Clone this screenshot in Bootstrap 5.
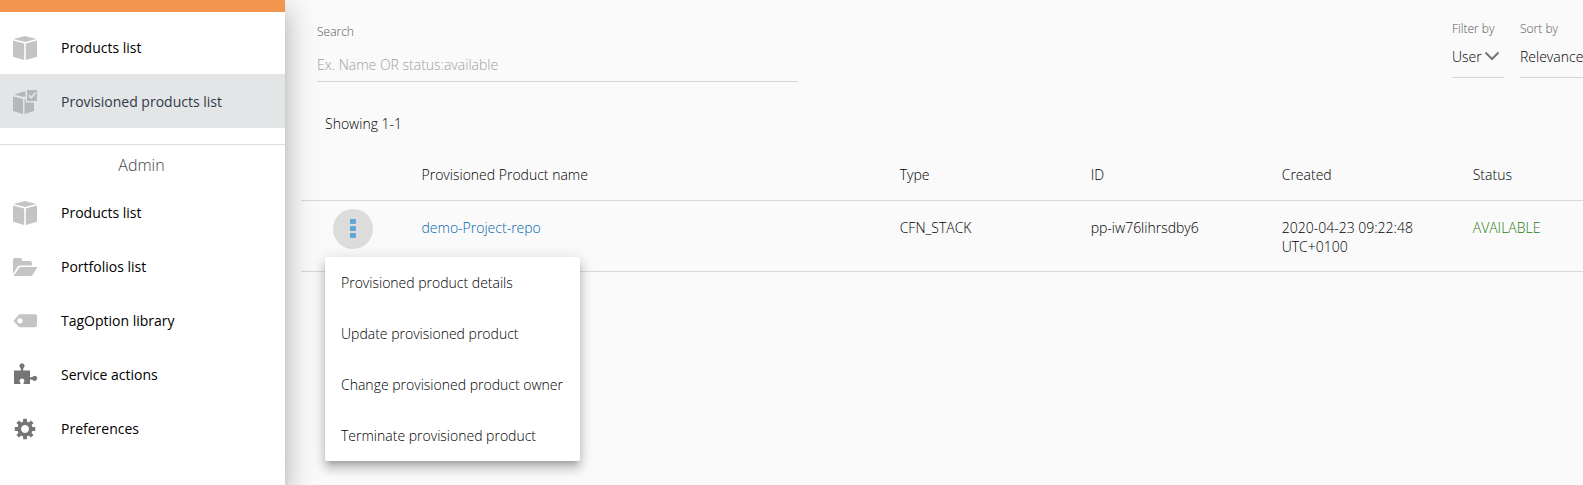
<!DOCTYPE html>
<html lang="en">
<head>
<meta charset="utf-8">
<meta name="viewport" content="width=device-width, initial-scale=1">
<title>Provisioned products list</title>
<link href="https://cdn.jsdelivr.net/npm/bootstrap@5.3.0/dist/css/bootstrap.min.css" rel="stylesheet">
<style>
  body { font-family: "Open Sans", "Noto Sans", sans-serif; font-size: 14px; font-weight: 300; line-height: 19px; color: #000; background: #fafafa; }
  .side { width: 285px; background: #fff; position: relative; z-index: 2;
    box-shadow: 0 8px 10px -5px rgba(0,0,0,.2), 0 16px 24px 2px rgba(0,0,0,.14), 0 6px 30px 5px rgba(0,0,0,.12); }
  .brand-strip { height: 12px; background: #f2954f; }
  .side .nav-link { height: 54px; gap: 23px; padding: 1px 12px 0; color: #000; font-weight: 500; }
  .side .nav-link.active { background: #e3e5e7; color: #2f3b49; }
  .side svg { width: 26px; height: 26px; flex: none; fill: #c4c4c4; }
  .side .active svg { fill: #b5b7b8; }
  .side svg.dark-icon { fill: #757575; }
  .admin-head { font-size: 16px; line-height: 24px; color: #444; padding: 8px 2px 0 0; border-top: 1px solid #ddd; font-weight: 300; }
  .work { padding-left: 16px; min-width: 0; }
  .small-label { font-size: 12px; line-height: 16px; color: #555; }
  .tools { padding: 21px 0 0 16px; }
  .search-box { width: 38%; padding-top: 3px; }
  .line-input { border: 0; border-bottom: 1px solid #d5d5d5; border-radius: 0; background-color: transparent; padding: 0; font-size: 14px; font-weight: 300; line-height: 19px; height: 34px; color: #000; }
  .line-input::placeholder { color: #a0a0a0; }
  .line-input.form-select { height: 41px; padding: 0 0 2px; }
  .pick-user { width: 52px; background-size: 16px 12px; background-position: right 4px top 13px;
    background-image: url("data:image/svg+xml,%3Csvg xmlns='http://www.w3.org/2000/svg' viewBox='0 0 16 12'%3E%3Cpath d='M1.5 2.5L8 9l6.500-6.500' fill='none' stroke='%23757575' stroke-width='2'/%3E%3C/svg%3E"); }
  .pick-sort { width: 63px; background-image: none; }
  .count { padding: 32px 0 0 24px; }
  .grid { table-layout: fixed; margin: 16px 0 0; }
  .grid th, .grid td { padding: 0 8px 0 0; border-bottom: 1px solid #d9d9d9; vertical-align: top; background: none; color: #000; font-weight: 300; }
  .grid th { height: 51px; padding-top: 16px; }
  .grid td { height: 71px; padding-top: 17px; }
  .grid td.act { padding: 8px 0 0 32px; }
  .grid a { color: #0068b0; }
  .grid td.ok { color: #237a08; }
  .dots { width: 40px; height: 40px; background: #dcdcdc; border: 0; }
  .grid .dropdown-menu { top: 48px; left: -8px; width: 255px; padding: 0; border: 0; border-radius: 2px; font-size: 14px; --bs-dropdown-link-color: #000;
    box-shadow: 0 5px 5px -3px rgba(0,0,0,.2), 0 8px 10px 1px rgba(0,0,0,.14), 0 3px 14px 2px rgba(0,0,0,.12); }
  .grid .dropdown-item { height: 51px; padding: 0 16px; font-weight: 300; }
</style>
</head>
<body>
<svg class="d-none">
  <symbol id="box" viewBox="0 0 26 26"><path d="M13 1L24.500 4 13 7 1.500 4z"/><path d="M1 5.500L12.200 8.500V25L1 21.800z"/><path d="M25 5.500L13.800 8.500V25L25 21.800z"/></symbol>
</svg>
<div class="d-flex min-vh-100 overflow-hidden">
  <aside class="side flex-shrink-0">
    <div class="brand-strip"></div>
    <nav class="nav flex-column flex-nowrap pt-2 pb-3">
      <a class="nav-link d-flex align-items-center" href="#"><svg><use href="#box"/></svg>Products list</a>
      <a class="nav-link d-flex align-items-center active" href="#">
        <svg viewBox="0 0 26 26"><path d="M2 5.500L12 2.500h1.500v5L11.500 8z"/><path d="M1 7.500L11 10v15L1 22z"/><path d="M12.500 10h1.200v3.500H22V22l-9.500 3z"/><path fill-rule="evenodd" d="M15 1h10v11H15zM16.300 6.800l2.900 3.100L24.200 4.200l-1.200-1.200-3.900 4.500-1.500-1.900z"/></svg>
        Provisioned products list</a>
    </nav>
    <h2 class="admin-head text-center mb-0">Admin</h2>
    <nav class="nav flex-column flex-nowrap pt-2">
      <a class="nav-link d-flex align-items-center" href="#"><svg><use href="#box"/></svg>Products list</a>
      <a class="nav-link d-flex align-items-center" href="#">
        <svg viewBox="0 0 26 26"><path d="M1 20V6q0-2 2-2h5q2 0 2 2v1h8q2 0 2 2v2.500H8q-1.500 0-2.500 1.200z"/><path d="M1.500 22l5.500-8q.8-1 2-1h16q.5.200 0 1l-4.500 7q-.7 1-2 1z"/></svg>
        Portfolios list</a>
      <a class="nav-link d-flex align-items-center" href="#">
        <svg viewBox="0 0 26 26"><path fill-rule="evenodd" d="M2 12.200L6.500 7q.7-.7 1.700-.7H23q2 0 2 2v9q0 2-2 2H8.200q-1 0-1.700-.7L2 13.500q-.6-.7 0-1.300zM8 10.200a2.700 2.700 0 1 0 .01 0z"/></svg>
        TagOption library</a>
      <a class="nav-link d-flex align-items-center" href="#">
        <svg class="dark-icon" viewBox="0 0 26 26"><path d="M2 8.500h6.800q.4-1.700-.7-3a2.500 2.500 0 1 1 3.800 0q-1.100 1.300-.7 3H18v6.600q1.700.4 3-.7a2.500 2.500 0 1 1 0 3.800q-1.300-1.100-3-.7V22h-6.500q-.2-1.300.8-2.500a2.400 2.400 0 1 0-4.600 0q1 1.200.8 2.500H2z"/></svg>
        Service actions</a>
      <a class="nav-link d-flex align-items-center" href="#">
        <svg class="dark-icon" viewBox="0 0 26 26"><path fill-rule="evenodd" d="M11.100 2.800h3.800v2.800l2 .8 2-2 2.700 2.700-2 2 .8 2h2.800v3.800h-2.800l-.8 2 2 2-2.700 2.700-2-2-2 .8v2.800h-3.800v-2.800l-2-.8-2 2-2.700-2.700 2-2-.8-2H2.800v-3.800h2.800l.8-2-2-2 2.700-2.700 2 2 2-.8zM13 9a4 4 0 1 0 .01 0z"/></svg>
        Preferences</a>
    </nav>
  </aside>

  <main class="work flex-grow-1">
    <form class="tools d-flex align-items-start justify-content-between">
      <div class="search-box">
        <label class="small-label d-block mb-2" for="q">Search</label>
        <input class="form-control line-input shadow-none" id="q" type="text" placeholder="Ex. Name OR status:available">
      </div>
      <div class="d-flex gap-3 flex-shrink-0">
        <div>
          <label class="small-label d-block" for="who">Filter by</label>
          <select class="form-select line-input pick-user" id="who"><option>User</option></select>
        </div>
        <div>
          <label class="small-label d-block" for="sort">Sort by</label>
          <select class="form-select line-input pick-sort" id="sort"><option>Relevance</option></select>
        </div>
      </div>
    </form>
    <p class="count mb-0">Showing 1-1</p>
    <table class="table grid">
      <colgroup><col style="width:9.4%"><col style="width:37.3%"><col style="width:14.9%"><col style="width:14.9%"><col style="width:14.9%"><col></colgroup>
      <thead>
        <tr><th scope="col"></th><th scope="col">Provisioned Product name</th><th scope="col">Type</th><th scope="col">ID</th><th scope="col">Created</th><th scope="col">Status</th></tr>
      </thead>
      <tbody>
        <tr>
          <td class="act">
            <div class="dropdown">
              <button class="dots rounded-circle d-flex align-items-center justify-content-center p-0" type="button" data-bs-toggle="dropdown" aria-expanded="true" aria-label="Actions">
                <svg width="6" height="20" viewBox="0 0 6 20" fill="#5fa8d3"><rect width="6" height="5" rx="1"/><rect y="7" width="6" height="5" rx="1"/><rect y="14" width="6" height="5" rx="1"/></svg>
              </button>
              <div class="dropdown-menu show">
                <button class="dropdown-item" type="button">Provisioned product details</button>
                <button class="dropdown-item" type="button">Update provisioned product</button>
                <button class="dropdown-item" type="button">Change provisioned product owner</button>
                <button class="dropdown-item" type="button">Terminate provisioned product</button>
              </div>
            </div>
          </td>
          <td><a class="text-decoration-none" href="#">demo-Project-repo</a></td>
          <td>CFN_STACK</td>
          <td>pp-iw76lihrsdby6</td>
          <td>2020-04-23 09:22:48<br>UTC+0100</td>
          <td class="ok">AVAILABLE</td>
        </tr>
      </tbody>
    </table>
  </main>
</div>
<script src="https://cdn.jsdelivr.net/npm/bootstrap@5.3.0/dist/js/bootstrap.bundle.min.js"></script>
</body>
</html>
